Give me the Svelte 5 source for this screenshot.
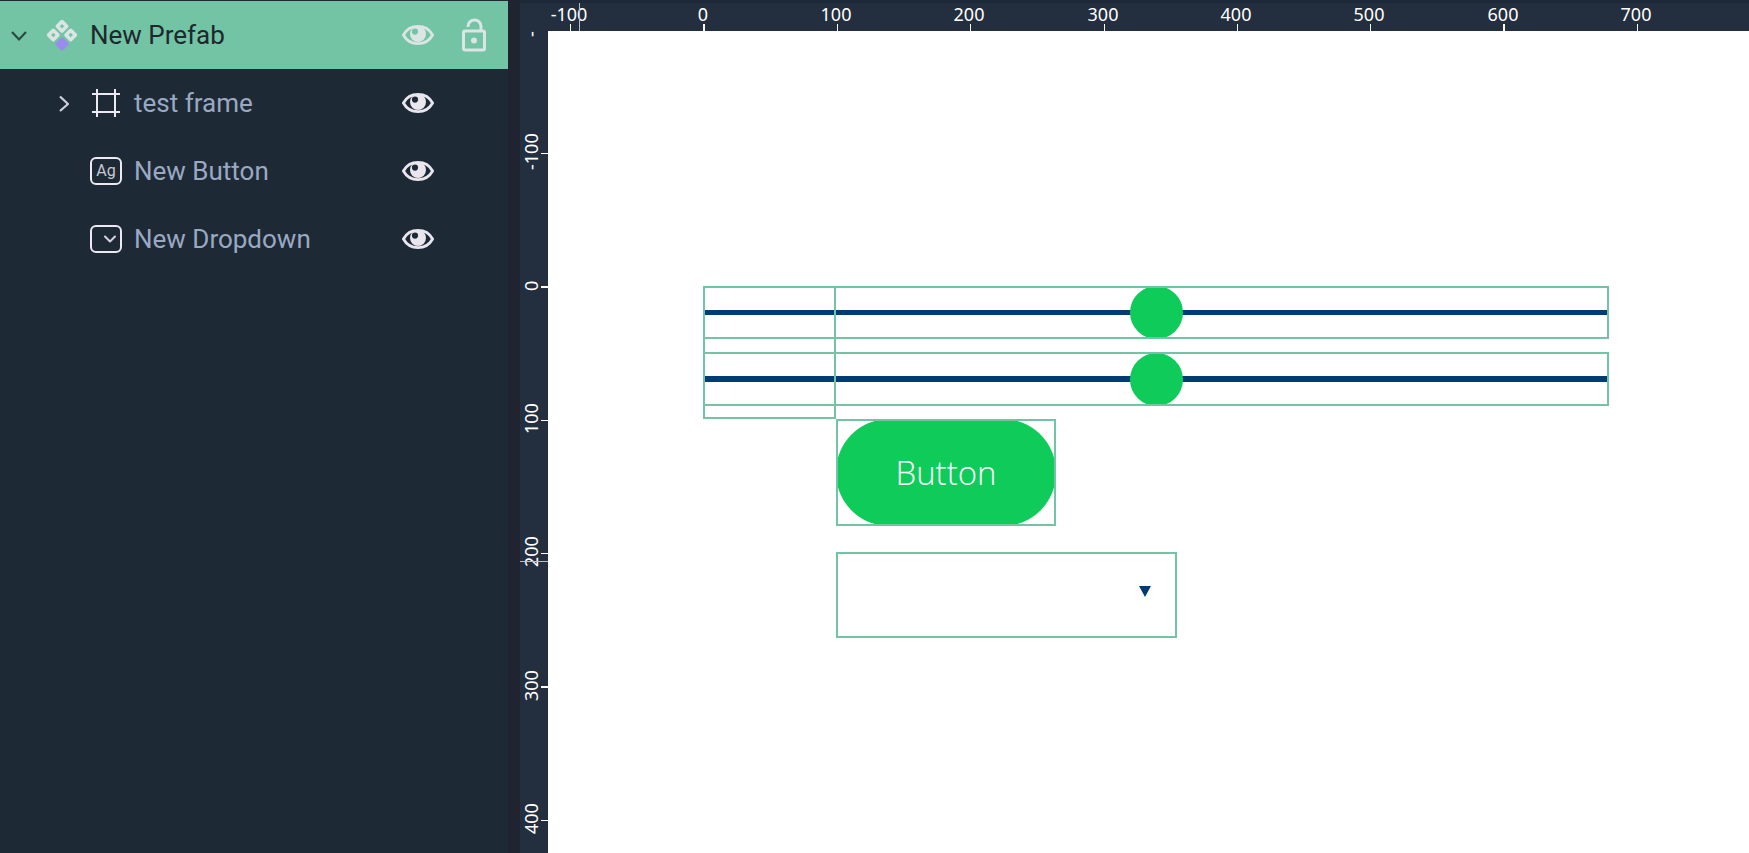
<script>
  const layers = [
    { name: 'New Prefab', kind: 'prefab', depth: 0, arrow: 'open', selected: true },
    { name: 'test frame', kind: 'frame', depth: 1, arrow: 'closed' },
    { name: 'New Button', kind: 'button', depth: 1 },
    { name: 'New Dropdown', kind: 'dropdown', depth: 1 }
  ];

  const unit = 400 / 3;
  const originX = 183.6;
  const originY = 255.5;
  const columns = [-100, 0, 100, 200, 300, 400, 500, 600, 700];
  const rows = [-200, -100, 0, 100, 200, 300, 400];
  const at = (origin, value) => Math.round(origin + (value / 100) * unit);

  let first = $state(50);
  let second = $state(50);
</script>

<div class="editor">
  <aside class="layers">
    <ul>
      {#each layers as layer}
        <li class:selected={layer.selected} class:child={layer.depth > 0}>
          {#if layer.arrow === 'open'}
            <button class="arrow" aria-label="Collapse">
              <svg width="18" height="14" viewBox="0 0 18 14"><path d="M2 4 9 11.500 16 4" fill="none" stroke="#2c4a40" stroke-width="2.200" /></svg>
            </button>
          {:else if layer.arrow === 'closed'}
            <button class="arrow" aria-label="Expand">
              <svg width="12" height="18" viewBox="0 0 12 18"><path d="M3 2.500 11 10 3 17" fill="none" stroke="#cfd2da" stroke-width="2.200" /></svg>
            </button>
          {:else}
            <span class="arrow"></span>
          {/if}

          <span class="kind">
            {#if layer.kind === 'prefab'}
              <svg width="32" height="32" viewBox="0 0 32 32" fill="none" stroke="#dce4e4" stroke-width="3.6" stroke-linejoin="round">
                <path d="M16 2.600 20.700 7.300 16 12 11.300 7.300Z" />
                <path d="M7.300 11.300 12 16 7.300 20.700 2.600 16Z" />
                <path d="M24.700 11.300 29.400 16 24.700 20.700 20 16Z" />
                <path d="M16 20.300 20.700 25 16 29.700 11.300 25Z" fill="#9b8bee" stroke="#9b8bee" />
              </svg>
            {:else if layer.kind === 'frame'}
              <svg width="32" height="32" viewBox="0 0 32 32" fill="none" stroke="#ece9f2" stroke-width="2"><path d="M7 2V30M25 2V30M2 7H30M2 25H30" /></svg>
            {:else if layer.kind === 'button'}
              <span class="chip">Ag</span>
            {:else}
              <span class="chip">
                <svg class="caret" width="12" height="8" viewBox="0 0 12 8"><path d="M1 1.500 6 6.500 11 1.500" fill="none" stroke="#d5d3dc" stroke-width="2" stroke-linecap="round" stroke-linejoin="round" /></svg>
              </span>
            {/if}
          </span>

          <span class="name">{layer.name}</span>

          <button class="tool" aria-label="Toggle visibility of {layer.name}">
            <svg width="32" height="22" viewBox="0 0 32 22">
              <path d="M1.400 11C4.500 5 9.800 2.300 16 2.300S27.500 5 30.600 11C27.500 16.500 22.200 19.700 16 19.700S4.500 16.500 1.400 11Z" fill="none" stroke="currentColor" stroke-width="2.800" />
              <path fill-rule="evenodd" d="M16 2A8 8 0 1 1 16 18 8 8 0 0 1 16 2ZM13 4.500A3.100 3.100 0 1 0 13 10.700 3.100 3.100 0 0 0 13 4.500Z" fill="currentColor" />
            </svg>
          </button>
          <span class="tool">
            {#if layer.selected}
              <button class="tool" aria-label="Lock {layer.name}">
                <svg width="24" height="34" viewBox="0 0 24 34" fill="none" stroke="currentColor" stroke-width="3">
                  <rect x="1.500" y="13" width="21" height="19" rx="1.500" />
                  <path d="M6 9V8.500A6.500 6.500 0 0 1 19 8.500V13" />
                  <circle cx="12" cy="22.500" r="3" fill="currentColor" stroke="none" />
                </svg>
              </button>
            {/if}
          </span>
        </li>
      {/each}
    </ul>
  </aside>

  <main class="workspace">
    <div class="ruler across">
      {#each columns as value}
        <span class="mark" class:wide={value % 600 === 0} style="left: {at(originX, value)}px">{value}</span>
      {/each}
      <i class="cursor"></i>
    </div>
    <div class="ruler down">
      {#each rows as value}
        <span class="mark" class:wide={value % 300 === 0} style="top: {at(originY, value)}px"><b>{value}</b></span>
      {/each}
      <i class="cursor"></i>
    </div>

    <section class="canvas">
      <input class="node slider one" type="range" aria-label="First slider" bind:value={first} />
      <input class="node slider two" type="range" aria-label="Second slider" bind:value={second} />
      <div class="node frame"></div>
      <div class="node button"><button>Button</button></div>
      <div class="node dropdown">
        <select aria-label="Dropdown"><option></option></select>
        <svg width="12" height="11" viewBox="0 0 12 11"><path d="M0 0H12L6 11Z" fill="#003c74" /></svg>
      </div>
    </section>
  </main>
</div>

<style>
  :global(body) {
    margin: 0;
    background: #1f2430;
  }
  .editor {
    display: flex;
    gap: 12px;
    height: 100vh;
    overflow: hidden;
    background: #1f2430;
    font-family: Roboto, sans-serif;
  }
  button {
    padding: 0;
    border: 0;
    background: none;
    color: inherit;
    font: inherit;
  }
  svg {
    display: block;
  }
  .layers {
    flex: 0 0 508px;
    background: #1e2936;
  }
  ul {
    margin: 0;
    padding: 1px 0 0;
    list-style: none;
  }
  li {
    display: flex;
    align-items: center;
    box-sizing: border-box;
    height: 68px;
    padding: 0 18px 0 10px;
    color: #9aa9c2;
    font-size: 26px;
  }
  li.child {
    padding-left: 54px;
  }
  li.selected {
    background: #72c4a4;
    color: #20272d;
  }
  .arrow {
    width: 18px;
    margin-right: 18px;
    display: flex;
    justify-content: center;
  }
  .kind {
    width: 32px;
    margin-right: 12px;
  }
  .chip {
    display: flex;
    align-items: center;
    justify-content: center;
    box-sizing: border-box;
    width: 32px;
    height: 28px;
    border: 2px solid #ece9f2;
    border-radius: 6px;
    color: #c9c7d0;
    font-size: 16px;
    line-height: 24px;
  }
  .caret {
    margin-left: 8px;
  }
  .name {
    flex: 1;
  }
  .tool {
    display: flex;
    justify-content: center;
    width: 32px;
    color: #e9e6ee;
  }
  .tool + .tool {
    margin-left: 24px;
  }
  .selected .tool {
    color: #dce4e4;
  }
  .workspace {
    flex: 1;
    display: grid;
    grid-template: 31px 1fr / 28px 1fr;
    min-width: 0;
  }
  .ruler {
    position: relative;
    overflow: hidden;
    background: #232e3e;
    color: #fff;
    font-family: "Noto Sans", sans-serif;
    font-size: 18px;
    line-height: 22px;
  }
  .across {
    grid-column: 1 / 3;
    border-top: 3px solid #1e2937;
  }
  .mark {
    position: absolute;
  }
  .across .mark {
    top: 0;
    width: 60px;
    height: 28px;
    margin-left: -31px;
    text-align: center;
  }
  .mark::after {
    content: "";
    position: absolute;
    background: #fff;
  }
  .across .mark::after {
    bottom: 0;
    left: 31px;
    width: 1px;
    height: 7px;
  }
  .across .wide::after {
    left: 30px;
    width: 2px;
  }
  .down .mark {
    left: 0;
    width: 28px;
    height: 60px;
    margin-top: -31px;
  }
  .down .mark::after {
    top: 31px;
    right: 0;
    width: 7px;
    height: 1px;
  }
  .down .wide::after {
    top: 30px;
    height: 2px;
  }
  .down b {
    display: block;
    width: 22px;
    height: 60px;
    font-weight: 400;
    text-align: center;
    writing-mode: vertical-rl;
    transform: rotate(180deg);
  }
  .cursor {
    position: absolute;
    background: #b9bec6;
  }
  .across .cursor {
    top: 0;
    bottom: 0;
    left: 59px;
    width: 1px;
  }
  .down .cursor {
    top: 530px;
    left: 0;
    right: 0;
    height: 1px;
  }
  .canvas {
    position: relative;
    overflow: hidden;
    background: #fff;
  }
  .node {
    position: absolute;
    box-sizing: border-box;
    margin: 0;
    border: 2px solid #72c4a4;
  }
  .frame {
    top: 255px;
    left: 155px;
    width: 133px;
    height: 133px;
    pointer-events: none;
  }
  .slider {
    left: 155px;
    width: 906px;
    height: 53px;
    overflow: hidden;
    appearance: none;
    background: linear-gradient(#003c74, #003c74) center / 100% 5px no-repeat;
  }
  .slider::-webkit-slider-thumb {
    appearance: none;
    width: 53px;
    height: 53px;
    border-radius: 50%;
    background: #0fcc5a;
  }
  .one {
    top: 255px;
  }
  .two {
    top: 321px;
    height: 54px;
    background-size: 100% 6px;
  }
  .button {
    top: 388px;
    left: 288px;
    width: 220px;
    height: 107px;
    overflow: hidden;
  }
  .button button {
    width: 220px;
    height: 107px;
    margin: -2px;
    border-radius: 53px;
    background: #0fcc5a;
    color: #fff;
    font: 350 33px "Open Sans", sans-serif;
  }
  .dropdown {
    top: 521px;
    left: 288px;
    width: 341px;
    height: 86px;
  }
  select {
    appearance: none;
    width: 100%;
    height: 100%;
    border: 0;
    background: none;
  }
  .dropdown svg {
    position: absolute;
    top: 32px;
    right: 24px;
    pointer-events: none;
  }
</style>
